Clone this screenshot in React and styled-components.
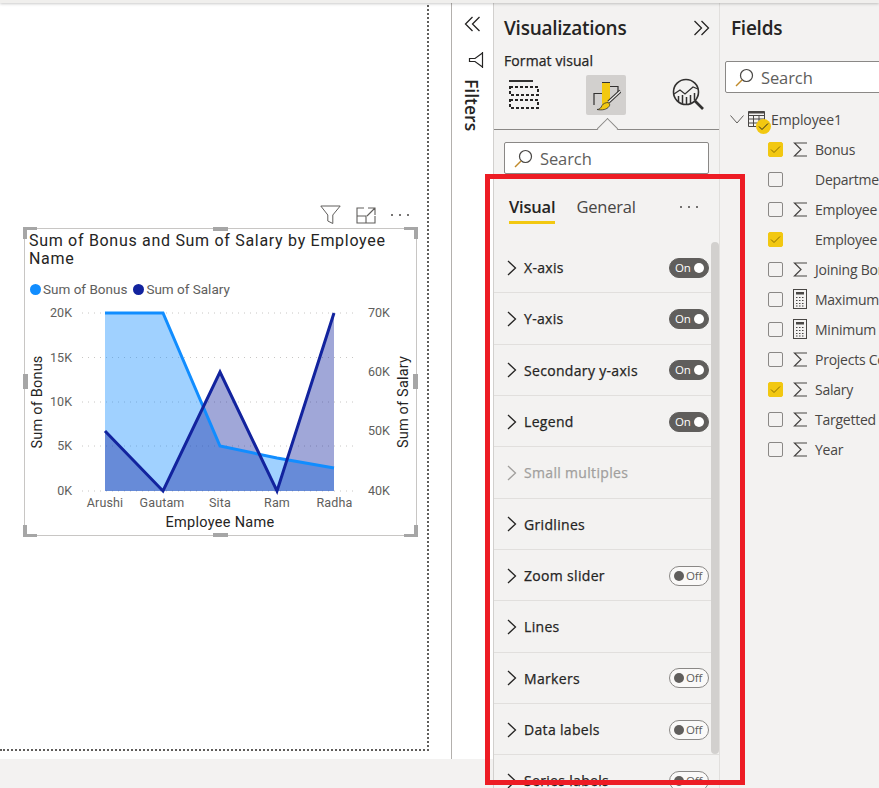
import React from "react";
import styled, { createGlobalStyle } from "styled-components";

const ui = '"Open Sans", "Noto Sans", sans-serif';
const din = 'Roboto, "Liberation Sans", sans-serif';

const Global = createGlobalStyle`
  html, body { margin: 0; padding: 0; background: #f3f2f1; }
  body { font-family: ${ui}; }
`;

const Page = styled.div`
  position: relative;
  width: 879px;
  height: 788px;
  overflow: hidden;
  display: flex;
  flex-direction: column;
  background: #f3f2f1;
`;
const TopBand = styled.div`
  flex: none;
  height: 3px;
  background: #f0efed;
  box-shadow: 0 1px 3px rgba(0, 0, 0, 0.22);
  position: relative;
  z-index: 2;
`;
const Body = styled.div`
  flex: 1;
  min-height: 0;
  display: flex;
`;
const LeftColumn = styled.div`
  flex: none;
  width: 493px;
  display: flex;
  flex-direction: column;
`;
const Workspace = styled.div`
  flex: none;
  height: 756px;
  display: flex;
  background: #fff;
`;
const CanvasArea = styled.div`
  flex: none;
  width: 451px;
  position: relative;
`;
const ReportPage = styled.div`
  position: relative;
  width: 427px;
  height: 744px;
  margin-top: 2px;
  border-right: 2px dotted #605e5c;
  border-bottom: 2px dotted #605e5c;
`;
const FilterRail = styled.div`
  flex: 1;
  border-left: 1px solid #b3b0ad;
  display: flex;
  flex-direction: column;
  align-items: flex-start;
  padding: 13px 0 0 12px;
`;
const FilterIconWrap = styled.div`
  margin: 19px 0 0 4px;
  height: 18px;
`;
const FiltersLabel = styled.div`
  writing-mode: vertical-rl;
  font-size: 17.5px;
  font-weight: 600;
  color: #252423;
  line-height: 18px;
  margin: 10px 0 0 -1px;
`;
const BottomBand = styled.div`
  flex: 1;
  background: #f3f2f1;
`;

/* Visual on the report canvas */
const Visual = styled.div`
  position: absolute;
  left: 24px;
  top: 223px;
  width: 391px;
  height: 306px;
  border: 1px solid #c8c6c4;
  display: flex;
  flex-direction: column;
`;
const VisualHeader = styled.div`
  position: absolute;
  right: 7px;
  top: -24px;
  display: flex;
  align-items: center;
  gap: 15px;
`;
const ChartTitle = styled.div`
  font-family: ${din};
  font-size: 16px;
  line-height: 18px;
  letter-spacing: 0.7px;
  color: #252423;
  padding: 3px 20px 0 4px;
`;
const Legend = styled.div`
  display: flex;
  gap: 6px;
  margin: 13px 0 0 5px;
  font-family: ${din};
  font-size: 13.5px;
  line-height: 16px;
  color: #605e5c;
`;
const LegendItem = styled.div`
  display: flex;
  align-items: center;
  gap: 2px;
`;
const LegendDot = styled.span`
  width: 11px;
  height: 11px;
  border-radius: 50%;
  background: ${(p) => p.$color};
`;
const PlotSvg = styled.svg`
  display: block;
  position: absolute;
  left: 0;
  top: 71px;
`;
const Corner = styled.span`
  position: absolute;
  width: 10px;
  height: 9px;
  border-color: #a6a6a6;
  border-style: solid;
  border-width: 0;
  ${(p) => (p.$v === "t" ? "top: -2px; border-top-width: 3px;" : "bottom: -2px; border-bottom-width: 3px;")}
  ${(p) => (p.$h === "l" ? "left: -2px; border-left-width: 4px;" : "right: -2px; border-right-width: 4px;")}
`;
const MidHandle = styled.span`
  position: absolute;
  background: #a6a6a6;
  ${(p) =>
    p.$side === "t" || p.$side === "b"
      ? `left: 188px; width: 15px; height: 4px; ${p.$side === "t" ? "top: -2px;" : "bottom: -2px;"}`
      : `top: 145px; width: 5px; height: 15px; ${p.$side === "l" ? "left: -2px;" : "right: -2px;"}`}
`;

/* Visualizations pane */
const VizPane = styled.div`
  position: relative;
  flex: none;
  width: 227px;
  box-sizing: border-box;
  border-left: 1px solid #d2d0ce;
  border-right: 1px solid #e1dfdd;
  background: #f3f2f1;
  display: flex;
  flex-direction: column;
  overflow: hidden;
`;
const PaneHeader = styled.div`
  flex: none;
  height: 49px;
  box-sizing: border-box;
  display: flex;
  align-items: center;
  justify-content: space-between;
  padding: 1px 9px 0 10px;
`;
const PaneTitle = styled.div`
  font-size: 19px;
  font-weight: 600;
  color: #252423;
  letter-spacing: -0.25px;
`;
const SubTitle = styled.div`
  flex: none;
  height: 18px;
  line-height: 18px;
  padding-left: 10px;
  font-size: 14px;
  font-weight: 400;
  -webkit-text-stroke: 0.25px currentColor;
  color: #252423;
  letter-spacing: 0.1px;
`;
const IconRow = styled.div`
  flex: none;
  position: relative;
  height: 60px;
  box-sizing: border-box;
  border-bottom: 1px solid #8a8886;
  display: flex;
  align-items: flex-start;
  padding: 5px 0 0 15px;
`;
const IconTab = styled.div`
  width: 40px;
  height: 40px;
  border-radius: 2px;
  background: ${(p) => (p.$active ? "#d2d0ce" : "transparent")};
  display: flex;
  align-items: center;
  justify-content: center;
`;
const BuildIcon = styled(IconTab)`
  margin-right: 37px;
  justify-content: flex-start;
  svg { margin: -2px 0 0 -1px; }
`;
const AnalyticsIcon = styled(IconTab)`
  margin-left: 42px;
`;
const Notch = styled.span`
  position: absolute;
  left: 106px;
  bottom: -7px;
  width: 14px;
  height: 14px;
  background: #f3f2f1;
  border-left: 1px solid #8a8886;
  border-top: 1px solid #8a8886;
  transform: rotate(45deg);
`;
const SearchBox = styled.div`
  flex: none;
  box-sizing: border-box;
  height: 32px;
  border: 1px solid #8a8886;
  border-radius: 2px;
  background: #fff;
  display: flex;
  align-items: center;
  gap: 7px;
  padding: 0 0 0 9px;
  font-size: 16.5px;
  color: #605e5c;
  letter-spacing: -0.1px;
`;
const VizSearch = styled(SearchBox)`
  margin: 12px 10px 0 10px;
`;
const Tabs = styled.div`
  flex: none;
  height: 68px;
  display: flex;
  align-items: flex-start;
  padding: 18px 21px 0 15px;
  box-sizing: border-box;
`;
const Tab = styled.div`
  height: 32px;
  box-sizing: border-box;
  line-height: 29px;
  font-size: 16.5px;
  font-weight: ${(p) => (p.$active ? 600 : 400)};
  letter-spacing: -0.2px;
  color: ${(p) => (p.$active ? "#252423" : "#484644")};
  border-bottom: 3px solid ${(p) => (p.$active ? "#f2c811" : "transparent")};
  margin-right: 21px;
`;
const MoreDots = styled.div`
  margin-left: auto;
  height: ${(p) => p.$h || 29}px;
  display: flex;
  align-items: center;
  gap: ${(p) => p.$gap || 6}px;
`;
const Dot = styled.span`
  width: 2px;
  height: 2px;
  background: #484644;
  border-radius: 50%;
`;
const List = styled.div`
  flex: 1;
  position: relative;
  min-height: 0;
`;
const Row = styled.div`
  box-sizing: border-box;
  height: 51.33px;
  border-bottom: 1px solid #e1dfdd;
  display: flex;
  align-items: center;
  padding: 1px 10px 0 12px;
  gap: 7px;
  font-size: 14px;
  font-weight: 400;
  letter-spacing: 0.32px;
  color: ${(p) => (p.$disabled ? "#a19f9d" : "#252423")};
`;
const RowName = styled.span`
  flex: 1;
  white-space: nowrap;
  -webkit-text-stroke: 0.25px currentColor;
`;
const Toggle = styled.div`
  position: relative;
  width: 40px;
  height: 20px;
  box-sizing: border-box;
  border-radius: 10px;
  border: 1px solid ${(p) => (p.$on ? "#605e5c" : "#8a8886")};
  background: ${(p) => (p.$on ? "#605e5c" : "#faf9f8")};
  color: ${(p) => (p.$on ? "#fff" : "#605e5c")};
  font-size: 11.5px;
  font-weight: 400;
  letter-spacing: -0.1px;
  line-height: 18px;
  padding-left: ${(p) => (p.$on ? "5px" : "16px")};
  &::after {
    content: "";
    position: absolute;
    top: 4px;
    ${(p) => (p.$on ? "right: 4px;" : "left: 4px;")}
    width: 10px;
    height: 10px;
    border-radius: 50%;
    background: ${(p) => (p.$on ? "#fff" : "#605e5c")};
  }
`;
const ScrollThumb = styled.div`
  position: absolute;
  right: 0;
  top: 0;
  width: 8px;
  height: 512px;
  border-radius: 4px;
  background: #d2d0ce;
`;

/* Fields pane */
const FieldsPane = styled.div`
  flex: 1;
  min-width: 0;
  display: flex;
  flex-direction: column;
  overflow: hidden;
`;
const FieldsTitle = styled(PaneTitle)`
  flex: none;
  height: 49px;
  line-height: 51px;
  padding-left: 11px;
`;
const FieldsSearch = styled(SearchBox)`
  margin: 9px -20px 0 5px;
`;
const TreeHead = styled.div`
  flex: none;
  position: relative;
  height: 30px;
  margin-top: 11px;
  display: flex;
  align-items: center;
  padding-left: 10px;
  font-size: 14px;
  color: #484644;
  letter-spacing: -0.12px;
  white-space: nowrap;
`;
const TableIcon = styled.div`
  position: relative;
  width: 17px;
  height: 17px;
  margin: 0 6px 0 4px;
`;
const TableBadge = styled.span`
  position: absolute;
  left: 8px;
  top: 8px;
  width: 15px;
  height: 15px;
  border-radius: 50%;
  background: #f2c811;
  display: flex;
  align-items: center;
  justify-content: center;
`;
const FieldRow = styled.div`
  flex: none;
  height: 30px;
  display: flex;
  align-items: center;
  padding-left: 48px;
  font-size: 14px;
  color: #484644;
  letter-spacing: -0.25px;
  white-space: nowrap;
`;
const Check = styled.span`
  flex: none;
  box-sizing: border-box;
  width: 15px;
  height: 15px;
  border-radius: 2px;
  border: 1px solid ${(p) => (p.$on ? "#f2c811" : "#8a8886")};
  background: ${(p) => (p.$on ? "#f2c811" : "transparent")};
  display: flex;
  align-items: center;
  justify-content: center;
`;
const KindIcon = styled.span`
  flex: none;
  width: 22px;
  margin-left: 10px;
  display: flex;
  align-items: center;
`;

/* Annotation drawn over the screenshot */
const Highlight = styled.div`
  position: absolute;
  left: 485px;
  top: 174px;
  width: 260px;
  height: 611px;
  box-sizing: border-box;
  border: 5px solid #ed1c24;
  pointer-events: none;
  z-index: 5;
`;

const Chev = ({ color = "#252423" }) => (
  <svg width="11" height="16" viewBox="0 0 11 16" fill="none">
    <path d="M2 1l7.5 7L2 15" stroke={color} strokeWidth="1.3" />
  </svg>
);
const DoubleLeft = () => (
  <svg width="17" height="16" viewBox="0 0 17 16" fill="none" stroke="#252423" strokeWidth="1.3">
    <path d="M8.5 1L1.5 8l7 7M15.5 1l-7 7 7 7" />
  </svg>
);
const DoubleRight = () => (
  <svg width="17" height="16" viewBox="0 0 17 16" fill="none" stroke="#252423" strokeWidth="1.3">
    <path d="M1.5 1l7 7-7 7M8.5 1l7 7-7 7" />
  </svg>
);
const SideFilterIcon = () => (
  <svg width="16" height="18" viewBox="0 0 16 18" fill="none" stroke="#252423" strokeWidth="1.2">
    <path d="M14.500 1v16M14.500 2L7 7.500H1.500v3H7l7.500 5.500" />
  </svg>
);
const Magnifier = () => (
  <svg width="19" height="19" viewBox="0 0 19 19" fill="none">
    <circle cx="11.5" cy="7.5" r="6" stroke="#484644" strokeWidth="1.2" />
    <path d="M7 12L1 18" stroke="#c08a2a" strokeWidth="1.4" />
  </svg>
);
const BuildVisual = () => (
  <svg width="32" height="30" viewBox="0 0 32 30" fill="none" shapeRendering="crispEdges">
    <path d="M1 1.500h24" stroke="#323130" strokeWidth="2" />
    <rect x="1.500" y="7.500" width="28" height="8" stroke="#252423" strokeWidth="2" strokeDasharray="3 2" />
    <rect x="1.500" y="20.500" width="28" height="8" stroke="#252423" strokeWidth="2" strokeDasharray="3 2" />
  </svg>
);
const FormatVisual = () => (
  <svg width="30" height="32" viewBox="0 0 30 32" fill="none">
    <rect x="11" y="3" width="8" height="23" fill="#f2c811" />
    <path d="M3 26V14.500H11M11 3.500H19M19 7.500H27V13" stroke="#323130" strokeWidth="1.2" />
    <path d="M29.500 12L17.500 23" stroke="#323130" strokeWidth="3.4" />
    <path d="M29.500 12L17.500 23" stroke="#f3f2f1" strokeWidth="1.2" />
    <path d="M6 30.500c3 0 4-2 5-4 1-2 4-3 6-3 2 1 2 3 1 4-2 3-7 4-12 3z" fill="#f2c811" stroke="#323130" strokeWidth="0.8" />
  </svg>
);
const AnalyticsVisual = () => (
  <svg width="32" height="34" viewBox="0 0 32 34" fill="none">
    <circle cx="14" cy="14" r="12.500" stroke="#323130" strokeWidth="1.6" />
    <path d="M2 16l6-4 5 4 8-7 5 2" stroke="#323130" strokeWidth="1.3" />
    <path d="M6.500 18v6M10.500 17v8.500M14.500 19v7M18.500 17v8M22.500 15v7" stroke="#323130" strokeWidth="1.5" />
    <path d="M23 23l8 8" stroke="#323130" strokeWidth="2.6" />
  </svg>
);
const Sigma = () => (
  <svg width="15" height="15" viewBox="0 0 15 15" fill="none" stroke="#484644">
    <path d="M14 1H1.500L8 7.500 1.500 14H14" strokeWidth="1.2" />
  </svg>
);
const Calculator = () => (
  <svg width="14" height="20" viewBox="0 0 14 20" fill="none" stroke="#484644">
    <rect x="0.500" y="0.500" width="13" height="19" />
    <rect x="3" y="3" width="8" height="2.500" fill="#484644" stroke="none" />
    <path d="M3 8.500h8M3 11.500h8M3 14.500h8M3 17h8" strokeDasharray="1.500 1.500" strokeWidth="1.200" />
  </svg>
);
const Tick = ({ color = "#8a6d00" }) => (
  <svg width="11" height="9" viewBox="0 0 11 9" fill="none">
    <path d="M1 4.500L4 7.500 10 1.500" stroke={color} strokeWidth="1" />
  </svg>
);

const xs = [105, 163, 220, 277, 334];
const bonusY = [313, 313, 446, 458, 468];
const salaryY = [431, 491, 372, 491, 313];
const line = (ys) => xs.map((x, i) => `${x},${ys[i]}`).join(" ");
const area = (ys) => `105,491 ${line(ys)} 334,491`;
const chartTextProps = { fontFamily: din };

const Plot = () => (
  <PlotSvg width="391" height="235" viewBox="25 300 391 235" {...chartTextProps}>
    {[313, 357.5, 402, 446, 491].map((y) => (
      <line key={y} x1="82" x2="358" y1={y} y2={y} stroke="#c8c6c4" strokeDasharray="1 5" />
    ))}
    <polygon points={area(bonusY)} fill="#118dff" opacity="0.4" />
    <polygon points={area(salaryY)} fill="#12239e" opacity="0.4" />
    <polyline points={line(bonusY)} fill="none" stroke="#118dff" strokeWidth="3" />
    <polyline points={line(salaryY)} fill="none" stroke="#12239e" strokeWidth="3" />
    <g fontSize="12.500" fill="#605e5c" textAnchor="end">
      <text x="72" y="317">20K</text>
      <text x="72" y="362">15K</text>
      <text x="72" y="406">10K</text>
      <text x="72" y="450">5K</text>
      <text x="72" y="495">0K</text>
    </g>
    <g fontSize="12.500" fill="#605e5c">
      <text x="368" y="317">70K</text>
      <text x="368" y="376">60K</text>
      <text x="368" y="435">50K</text>
      <text x="368" y="495">40K</text>
    </g>
    <g fontSize="12.500" fill="#605e5c" textAnchor="middle" letterSpacing="0.15">
      <text x="105" y="507">Arushi</text>
      <text x="162" y="507">Gautam</text>
      <text x="220" y="507">Sita</text>
      <text x="277" y="507">Ram</text>
      <text x="334.500" y="507">Radha</text>
    </g>
    <text x="220" y="527" fontSize="14.500" fill="#252423" textAnchor="middle" letterSpacing="0.3">Employee Name</text>
    <text transform="translate(42 402) rotate(-90)" fontSize="14.500" fill="#252423" textAnchor="middle" letterSpacing="0.2">Sum of Bonus</text>
    <text transform="translate(408 402) rotate(-90)" fontSize="14.500" fill="#252423" textAnchor="middle" letterSpacing="0.2">Sum of Salary</text>
  </PlotSvg>
);

const rows = [
  { name: "X-axis", toggle: "On" },
  { name: "Y-axis", toggle: "On" },
  { name: "Secondary y-axis", toggle: "On" },
  { name: "Legend", toggle: "On" },
  { name: "Small multiples", disabled: true },
  { name: "Gridlines" },
  { name: "Zoom slider", toggle: "Off" },
  { name: "Lines" },
  { name: "Markers", toggle: "Off" },
  { name: "Data labels", toggle: "Off" },
  { name: "Series labels", toggle: "Off" },
];

const fields = [
  { name: "Bonus", on: true, icon: "sigma" },
  { name: "Department" },
  { name: "Employee ID", icon: "sigma" },
  { name: "Employee Name", on: true },
  { name: "Joining Bonus", icon: "sigma" },
  { name: "Maximum Salary", icon: "calc" },
  { name: "Minimum Salary", icon: "calc" },
  { name: "Projects Completed", icon: "sigma" },
  { name: "Salary", on: true, icon: "sigma" },
  { name: "Targetted Projects", icon: "sigma" },
  { name: "Year", icon: "sigma" },
];

export default function App() {
  return (
    <Page>
      <Global />
      <TopBand />
      <Body>
        <LeftColumn>
          <Workspace>
            <CanvasArea>
              <ReportPage>
                <Visual>
                  <VisualHeader>
                    <svg width="21" height="20" viewBox="0 0 21 20" fill="none" stroke="#605e5c" strokeWidth="1">
                      <path d="M.8 1h19.400l-7.400 9v8.500l-5-2.500v-6z" />
                    </svg>
                    <svg width="20" height="17" viewBox="0 0 20 17" fill="none" stroke="#605e5c" strokeWidth="1.100">
                      <path d="M8 1H1v15h18V9M1 9h9v7M12 1h7v7M19 1l-8 8" />
                    </svg>
                    <MoreDots $h={16} $gap={6}>
                      <Dot /><Dot /><Dot />
                    </MoreDots>
                  </VisualHeader>
                  <ChartTitle>Sum of Bonus and Sum of Salary by Employee Name</ChartTitle>
                  <Legend>
                    <LegendItem><LegendDot $color="#118dff" />Sum of Bonus</LegendItem>
                    <LegendItem><LegendDot $color="#12239e" />Sum of Salary</LegendItem>
                  </Legend>
                  <Plot />
                  <Corner $v="t" $h="l" /><Corner $v="t" $h="r" />
                  <Corner $v="b" $h="l" /><Corner $v="b" $h="r" />
                  <MidHandle $side="t" /><MidHandle $side="b" />
                  <MidHandle $side="l" /><MidHandle $side="r" />
                </Visual>
              </ReportPage>
            </CanvasArea>
            <FilterRail>
              <DoubleLeft />
              <FilterIconWrap><SideFilterIcon /></FilterIconWrap>
              <FiltersLabel>Filters</FiltersLabel>
            </FilterRail>
          </Workspace>
          <BottomBand />
        </LeftColumn>

        <VizPane>
          <PaneHeader>
            <PaneTitle>Visualizations</PaneTitle>
            <DoubleRight />
          </PaneHeader>
          <SubTitle>Format visual</SubTitle>
          <IconRow>
            <BuildIcon><BuildVisual /></BuildIcon>
            <IconTab $active><FormatVisual /></IconTab>
            <AnalyticsIcon><AnalyticsVisual /></AnalyticsIcon>
            <Notch />
          </IconRow>
          <VizSearch><Magnifier />Search</VizSearch>
          <Tabs>
            <Tab $active>Visual</Tab>
            <Tab>General</Tab>
            <MoreDots><Dot /><Dot /><Dot /></MoreDots>
          </Tabs>
          <List>
            {rows.map((r) => (
              <Row key={r.name} $disabled={r.disabled}>
                <Chev color={r.disabled ? "#a19f9d" : "#252423"} />
                <RowName>{r.name}</RowName>
                {r.toggle && <Toggle $on={r.toggle === "On"}>{r.toggle}</Toggle>}
              </Row>
            ))}
            <ScrollThumb />
          </List>
        </VizPane>

        <FieldsPane>
          <FieldsTitle>Fields</FieldsTitle>
          <FieldsSearch><Magnifier />Search</FieldsSearch>
          <TreeHead>
            <svg width="14" height="9" viewBox="0 0 14 9" fill="none" stroke="#605e5c" strokeWidth="1">
              <path d="M.5.5L7 8l6.500-7.500" />
            </svg>
            <TableIcon>
              <svg width="17" height="17" viewBox="0 0 17 17" fill="none" stroke="#484644" strokeWidth="1">
                <path d="M.5.500h16v15H.5zM.5 4.500h16M.5 8h16M.5 12h16M5.500 4.500v11M11 4.500v11" />
                <path d="M.5 1.500h16" strokeWidth="2" />
              </svg>
              <TableBadge><Tick color="#252423" /></TableBadge>
            </TableIcon>
            Employee1
          </TreeHead>
          {fields.map((f) => (
            <FieldRow key={f.name}>
              <Check $on={f.on}>{f.on && <Tick />}</Check>
              <KindIcon>
                {f.icon === "sigma" && <Sigma />}
                {f.icon === "calc" && <Calculator />}
              </KindIcon>
              {f.name}
            </FieldRow>
          ))}
        </FieldsPane>
      </Body>
      <Highlight />
    </Page>
  );
}
